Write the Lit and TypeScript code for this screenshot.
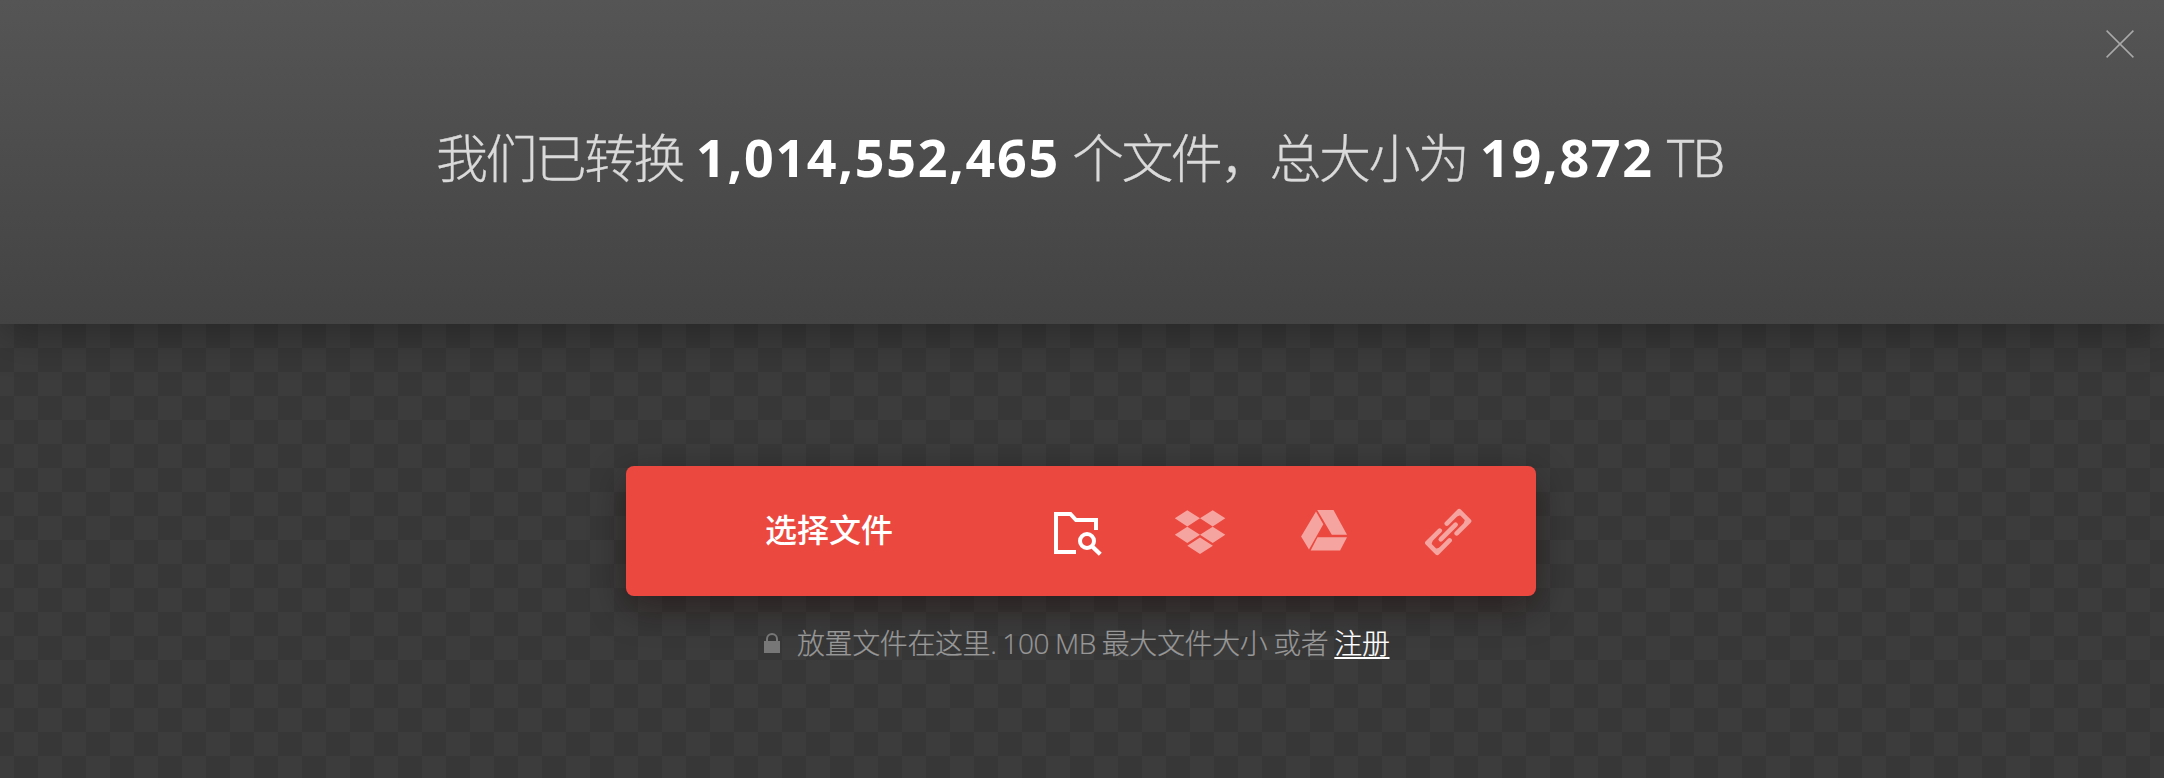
import { LitElement, html, css, svg } from "lit";
import { customElement } from "lit/decorators.js";

@customElement("source-icons")
class SourceIcons extends LitElement {
  static styles = css`
    :host { display: flex; align-items: center; }
    svg { display: block; width: 124px; height: 60px; color: #f5a4a0; }
    .active { color: #fff; }
  `;

  private icons = [
    svg`<g fill="none" stroke="currentColor" stroke-width="4"><path d="M50 48H30V10H44.4L50 16H70V26"/><circle cx="61" cy="37" r="7"/><path d="M66 42.2L74.3 50.3" stroke-width="4.2"/></g>`,
    svg`<path fill="currentColor" d="M63.3 6.2L76 14.3L63.3 22.5L50.8 14.3ZM88.7 6.2L101.3 14.3L88.7 22.5L76 14.3ZM63.3 22.7L76 30.8L63.3 39L50.8 30.8ZM88.7 22.7L101.3 30.8L88.7 39L76 30.8ZM76 33.6L88.9 41.8L76 50L63.3 41.8Z"/>`,
    svg`<path fill="currentColor" d="M36 7.4L43.3 20.3L29 45.5L21.1 32.5ZM37.2 6H53.5L67 30.8H51.8ZM37.5 33.2H67L60.1 46.5H30.7Z"/>`,
    svg`<g fill="none" stroke="currentColor" stroke-width="4.6" stroke-linecap="round" stroke-linejoin="round" transform="translate(61.2 29) rotate(-45)"><path d="M-5 -7H-22.5V7H-5M5 7H22.5V-7H5"/><path d="M-10.5 0H10.5"/><path d="M-21 -4L-18 -5.5M-21 4L-18 5.5M21 -4L18 -5.5M21 4L18 5.5" stroke-width="2"/></g>`,
  ];

  render() {
    return html`
      <svg class="active" viewBox="4 -3 124 60">${this.icons[0]}</svg>
      <svg viewBox="30 -3 124 60">${this.icons[1]}</svg>
      <svg viewBox="-2 -3 124 60">${this.icons[2]}</svg>
      <svg viewBox="15 -2 124 60">${this.icons[3]}</svg>
    `;
  }
}

@customElement("app-root")
class AppRoot extends LitElement {
  static styles = css`
    :host {
      display: flex;
      flex-direction: column;
      height: 778px;
      overflow: hidden;
      font-family: "Open Sans", "Noto Sans CJK SC", sans-serif;
      background: repeating-conic-gradient(#3c3c3c 0 25%, #373737 0 50%) 38px 12px / 48px 48px;
    }
    header {
      position: relative;
      box-sizing: border-box;
      flex: 0 0 324px;
      padding-top: 113px;
      padding-left: 436px;
      background: linear-gradient(#555, #434343);
      box-shadow: 0 10px 40px rgba(0, 0, 0, 0.3);
      color: #dadada;
    }
    h1 {
      margin: 0;
      display: flex;
      white-space: pre;
      font-size: 52px;
      line-height: 88px;
      font-weight: 300;
    }
    .han { letter-spacing: -0.05em; font-family: "Noto Sans CJK SC", sans-serif; -webkit-text-stroke: 0.3px; line-height: 86px; }
    .number { color: #fff; font-weight: 700; letter-spacing: 1.7px; }
    .first { width: 260px; }
    .total { width: 376px; }
    .middle { width: 408px; }
    .size { width: 187px; }
    .unit { letter-spacing: -1.8px; -webkit-text-stroke: 0.6px; }
    .close { position: absolute; top: 30px; right: 30px; width: 28px; height: 28px; }
    main {
      display: flex;
      flex-direction: column;
      align-items: flex-start;
      padding: 142px 0 0 626px;
    }
    .picker {
      display: flex;
      align-items: center;
      width: 910px;
      height: 130px;
      border-radius: 8px;
      background: #eb4940;
      box-shadow: 0 12px 36px rgba(25, 0, 0, 0.45);
    }
    .label {
      width: 404px;
      box-sizing: border-box;
      padding: 0 0 6px 139px;
      color: #fff;
      font: 500 32px/60px "Noto Sans CJK SC", sans-serif;
    }
    .hint {
      display: flex;
      align-items: center;
      margin: 25px 0 0 138px;
      color: #989898;
      font-size: 28px;
      font-weight: 300;
      line-height: 44px;
      white-space: pre;
      letter-spacing: -0.4px;
      word-spacing: -1px;
      -webkit-text-stroke: 0.2px;
    }
    .lock { width: 16px; height: 20px; margin-right: 17px; }
    a { color: #fff; text-decoration: underline; text-decoration-thickness: 2px; text-underline-offset: 3px; }
  `;

  render() {
    return html`
      <header>
        <h1><span class="han first">我们已转换</span><span class="number total">1,014,552,465</span><span class="han middle">个文件，总大小为</span><span class="number size">19,872</span><span class="unit">TB</span></h1>
        <svg class="close" viewBox="0 0 28 28"><path d="M.6.6L27.4 27.4M27.4.6L.6 27.4" stroke="#a9a9a9" stroke-width="1.5"/></svg>
      </header>
      <main>
        <div class="picker"><span class="label">选择文件</span><source-icons></source-icons></div>
        <div class="hint"><svg class="lock" viewBox="0 0 16 20"><path d="M0 8H16V20H0Z" fill="#777"/><path d="M3 8V6A5 5 0 0 1 13 6V8" fill="none" stroke="#777" stroke-width="2"/></svg><span>放置文件在这里. 100 MB 最大文件大小 或者 <a>注册</a></span></div>
      </main>
    `;
  }
}
